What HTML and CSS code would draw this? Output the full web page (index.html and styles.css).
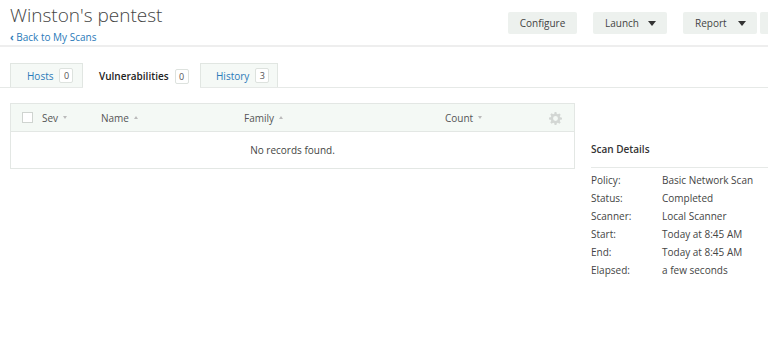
FILE: index.html
```html
<!DOCTYPE html>
<html lang="en">
<head>
  <meta charset="UTF-8">
  <title>Winston's pentest</title>
  <link rel="stylesheet" href="styles.css">
</head>
<body>
  <div class="page">

    <div class="page-header">
      <div class="title-block">
        <h1>Winston's pentest</h1>
        <a href="#" class="back-link"><span class="chev">&#8249;</span> Back to My Scans</a>
      </div>
      <div class="actions">
        <button class="btn btn-configure">Configure</button>
        <button class="btn btn-drop">Launch <span class="caret"></span></button>
        <button class="btn btn-drop btn-report">Report <span class="caret"></span></button>
        <button class="btn btn-more" aria-label="More"></button>
      </div>
    </div>

    <!-- Abas -->
    <div class="tabs">
      <a href="#" class="tab">Hosts <span class="badge">0</span></a>
      <a href="#" class="tab active">Vulnerabilities <span class="badge">0</span></a>
      <a href="#" class="tab">History <span class="badge">3</span></a>
    </div>

    <div class="content">
      <div class="results">
        <div class="table-head">
          <span class="col col-check"><span class="checkbox"></span></span>
          <span class="col col-sev">Sev <span class="sort down"></span></span>
          <span class="col col-name">Name <span class="sort up"></span></span>
          <span class="col col-family">Family <span class="sort up"></span></span>
          <span class="col col-count">Count <span class="sort down"></span></span>
          <span class="col col-gear">
            <svg width="13" height="13" viewBox="0 0 16 16">
              <path fill="#d3d7d4" d="M6.9 0h2.2l.4 2.2c.5.2 1 .4 1.4.7l1.9-1.2 1.6 1.6-1.2 1.9c.3.4.5.9.7 1.4l2.1.4v2.2l-2.1.4c-.2.5-.4 1-.7 1.4l1.2 1.9-1.6 1.6-1.9-1.2c-.4.3-.9.5-1.4.7L9.1 16H6.9l-.4-2.1c-.5-.2-1-.4-1.4-.7l-1.9 1.2-1.6-1.6 1.2-1.9c-.3-.4-.5-.9-.7-1.4L0 9.1V6.9l2.1-.4c.2-.5.4-1 .7-1.4L1.6 3.2l1.6-1.6 1.9 1.2c.4-.3.9-.5 1.4-.7zM8 5a3 3 0 100 6 3 3 0 000-6z"/>
            </svg>
          </span>
        </div>
        <div class="empty">No records found.</div>
      </div>

      <div class="scan-details">
        <h3>Scan Details</h3>
        <dl>
          <dt>Policy:</dt><dd>Basic Network Scan</dd>
          <dt>Status:</dt><dd>Completed</dd>
          <dt>Scanner:</dt><dd>Local Scanner</dd>
          <dt>Start:</dt><dd>Today at 8:45 AM</dd>
          <dt>End:</dt><dd>Today at 8:45 AM</dd>
          <dt>Elapsed:</dt><dd>a few seconds</dd>
        </dl>
      </div>
    </div>

  </div>
</body>
</html>
```

FILE: styles.css
```css
html, body {
  margin: 0;
  overflow: hidden;
}

* {
  box-sizing: border-box;
}

body {
  font-family: 'Open Sans', 'Noto Sans', sans-serif;
  font-size: 10px;
  color: #444;
  background-color: #fff;
}

.page {
  width: 834px;
}

/* Cabeçalho */
.page-header {
  display: flex;
  justify-content: space-between;
  padding: 3px 0 0 10px;
  height: 47px;
  border-bottom: 2px solid #eeeeee;
}

h1 {
  margin: 0;
  font-size: 19px;
  line-height: 24px;
  font-weight: 300;
  color: #444;
}

.back-link {
  display: block;
  margin-top: 3px;
  color: #2a7ab9;
  text-decoration: none;
  font-size: 10px;
  line-height: 14px;
}

.back-link .chev {
  font-weight: bold;
}

.actions {
  display: flex;
  align-items: flex-start;
  padding-top: 9px;
  gap: 16px;
}

.btn {
  height: 22px;
  border: none;
  border-radius: 2px;
  background-color: #edf1ee;
  color: #444;
  font-family: inherit;
  font-size: 10px;
  padding: 0;
  cursor: pointer;
}

.btn-configure {
  width: 69px;
}

.btn-drop {
  width: 74px;
  display: flex;
  align-items: center;
  justify-content: space-between;
  padding: 0 11px 0 12px;
}

.btn-report {
  margin-right: -13px;
}

.btn-more {
  width: 74px;
}

.caret {
  width: 0;
  height: 0;
  border-left: 4px solid transparent;
  border-right: 4px solid transparent;
  border-top: 5px solid #333;
}

/* Abas */
.tabs {
  display: flex;
  margin-top: 16px;
  padding-left: 10px;
  border-bottom: 1px solid #e6e9e7;
}

.tab {
  display: flex;
  align-items: center;
  gap: 6px;
  height: 24px;
  padding: 0 0 0 16px;
  margin-bottom: -1px;
  border: 1px solid #e1e6e2;
  border-bottom: none;
  background-color: #f5f9f6;
  color: #2a7ab9;
  text-decoration: none;
  font-size: 10px;
}

.tab:first-child {
  width: 73px;
}

.tab.active {
  background-color: #fff;
  color: #222;
  font-weight: 600;
  border-color: transparent;
  height: 25px;
  width: 117px;
  padding-left: 15px;
}

.tab:last-child {
  width: 78px;
  padding-left: 15px;
}

.badge {
  display: inline-block;
  min-width: 14px;
  height: 15px;
  line-height: 13px;
  text-align: center;
  border: 1px solid #dde2de;
  border-radius: 2px;
  background-color: #fff;
  color: #555;
  font-size: 9px;
  font-weight: normal;
}

/* Conteúdo */
.content {
  display: flex;
  gap: 16px;
  padding-left: 10px;
  margin-top: 15px;
}

.results {
  width: 565px;
  border: 1px solid #e3e7e4;
  align-self: flex-start;
}

.table-head {
  display: flex;
  align-items: center;
  height: 28px;
  background-color: #f4f9f5;
  border-bottom: 1px solid #e3e7e4;
  color: #555;
}

.col {
  display: flex;
  align-items: center;
  gap: 5px;
}

.col-check {
  width: 31px;
  padding-left: 11px;
}

.checkbox {
  width: 11px;
  height: 11px;
  border: 1px solid #cfd4d0;
  background-color: #fff;
}

.col-sev {
  width: 59px;
}

.col-name {
  width: 143px;
}

.col-family {
  width: 201px;
}

.col-count {
  width: 104px;
}

.col-gear {
  padding-top: 2px;
}

.sort {
  width: 0;
  height: 0;
  border-left: 2px solid transparent;
  border-right: 2px solid transparent;
}

.sort.down {
  border-top: 3px solid #bbb;
}

.sort.up {
  border-bottom: 3px solid #bbb;
}

.empty {
  height: 36px;
  line-height: 36px;
  text-align: center;
  color: #444;
}

/* Detalhes */
.scan-details {
  flex: 1;
  margin-top: 38px;
}

.scan-details h3 {
  margin: 0;
  font-size: 10px;
  font-weight: 600;
  color: #333;
  line-height: 16px;
  padding-bottom: 10px;
  border-bottom: 1px solid #e6e9e7;
}

dl {
  display: grid;
  grid-template-columns: 71px 1fr;
  margin: 3px 0 0;
  line-height: 18px;
}

dt, dd {
  margin: 0;
  color: #444;
}
```
